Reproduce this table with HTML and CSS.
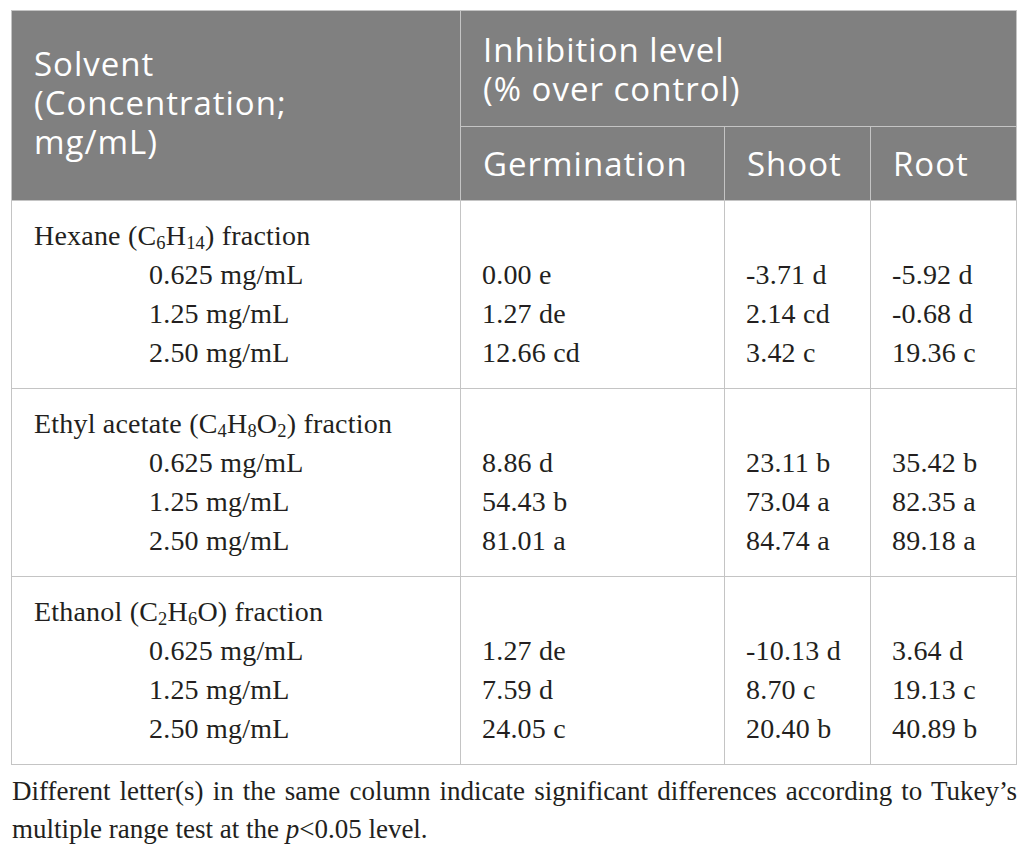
FILE: index.html
```html
<!DOCTYPE html>
<html lang="en">
<head>
    <meta charset="UTF-8">
    <meta name="viewport" content="width=device-width, initial-scale=1.0">
    <title>Inhibition level table</title>
    <link rel="stylesheet" href="styles.css">
</head>
<body>
    <div class="table-wrap">
        <table class="data-table">
            <colgroup>
                <col class="col-solvent">
                <col class="col-germ">
                <col class="col-shoot">
                <col class="col-root">
            </colgroup>
            <thead>
                <tr class="head-top">
                    <th rowspan="2" class="head-solvent">Solvent<br>(Concentration;<br>mg/mL)</th>
                    <th colspan="3">Inhibition level<br>(% over control)</th>
                </tr>
                <tr class="head-sub">
                    <th>Germination</th>
                    <th>Shoot</th>
                    <th>Root</th>
                </tr>
            </thead>
            <tbody>
                <tr class="first">
                    <td>Hexane (C<sub>6</sub>H<sub>14</sub>) fraction</td>
                    <td></td><td></td><td></td>
                </tr>
                <tr>
                    <td class="conc">0.625 mg/mL</td>
                    <td>0.00 e</td><td>-3.71 d</td><td>-5.92 d</td>
                </tr>
                <tr>
                    <td class="conc">1.25 mg/mL</td>
                    <td>1.27 de</td><td>2.14 cd</td><td>-0.68 d</td>
                </tr>
                <tr class="last">
                    <td class="conc">2.50 mg/mL</td>
                    <td>12.66 cd</td><td>3.42 c</td><td>19.36 c</td>
                </tr>
            </tbody>
            <tbody>
                <tr class="first">
                    <td>Ethyl acetate (C<sub>4</sub>H<sub>8</sub>O<sub>2</sub>) fraction</td>
                    <td></td><td></td><td></td>
                </tr>
                <tr>
                    <td class="conc">0.625 mg/mL</td>
                    <td>8.86 d</td><td>23.11 b</td><td>35.42 b</td>
                </tr>
                <tr>
                    <td class="conc">1.25 mg/mL</td>
                    <td>54.43 b</td><td>73.04 a</td><td>82.35 a</td>
                </tr>
                <tr class="last">
                    <td class="conc">2.50 mg/mL</td>
                    <td>81.01 a</td><td>84.74 a</td><td>89.18 a</td>
                </tr>
            </tbody>
            <tbody>
                <tr class="first">
                    <td>Ethanol (C<sub>2</sub>H<sub>6</sub>O) fraction</td>
                    <td></td><td></td><td></td>
                </tr>
                <tr>
                    <td class="conc">0.625 mg/mL</td>
                    <td>1.27 de</td><td>-10.13 d</td><td>3.64 d</td>
                </tr>
                <tr>
                    <td class="conc">1.25 mg/mL</td>
                    <td>7.59 d</td><td>8.70 c</td><td>19.13 c</td>
                </tr>
                <tr class="last">
                    <td class="conc">2.50 mg/mL</td>
                    <td>24.05 c</td><td>20.40 b</td><td>40.89 b</td>
                </tr>
            </tbody>
        </table>
        <p class="table-note">Different letter(s) in the same column indicate significant differences according to Tukey’s multiple range test at the <i>p</i>&lt;0.05 level.</p>
    </div>
</body>
</html>
```

FILE: styles.css
```css
* {
    margin: 0;
    padding: 0;
    box-sizing: border-box;
}

body {
    background: #ffffff;
    font-family: "Liberation Serif", "Times New Roman", serif;
    color: #231f20;
}

.table-wrap {
    padding: 10px 9px 0 11px;
}

.data-table {
    width: 100%;
    border-collapse: collapse;
    table-layout: fixed;
}

.col-solvent { width: 449px; }
.col-germ { width: 264px; }
.col-shoot { width: 146px; }
.col-root { width: 146px; }

.data-table th {
    background: #808080;
    color: #ffffff;
    font-family: "Open Sans", sans-serif;
    font-weight: 400;
    font-size: 33px;
    letter-spacing: 1px;
    line-height: 39px;
    text-align: left;
    vertical-align: middle;
    padding: 0 22px;
    border: 1px solid #c4c4c4;
}

.head-top th {
    height: 116px;
}

.head-top th.head-solvent {
    padding-bottom: 6px;
}

.head-sub th {
    height: 74px;
}

.data-table tbody {
    border: 1px solid #c4c4c4;
}

.data-table td {
    font-size: 28px;
    letter-spacing: 0.2px;
    line-height: 39px;
    height: 39px;
    padding: 0 21px;
    border-left: 1px solid #c4c4c4;
    border-right: 1px solid #c4c4c4;
    white-space: nowrap;
    vertical-align: middle;
}

.data-table td:first-child {
    padding-left: 22px;
}

.data-table tr.first td {
    height: 54px;
    padding-top: 15px;
}

.data-table tr.last td {
    height: 55px;
    padding-bottom: 16px;
}

.data-table td.conc {
    padding-left: 137px;
}

.data-table sub {
    font-size: 0.66em;
    line-height: 0;
    vertical-align: -0.24em;
}

.table-note {
    margin-top: 7px;
    font-size: 27px;
    line-height: 38px;
    text-align: justify;
    padding-left: 1px;
}
```
